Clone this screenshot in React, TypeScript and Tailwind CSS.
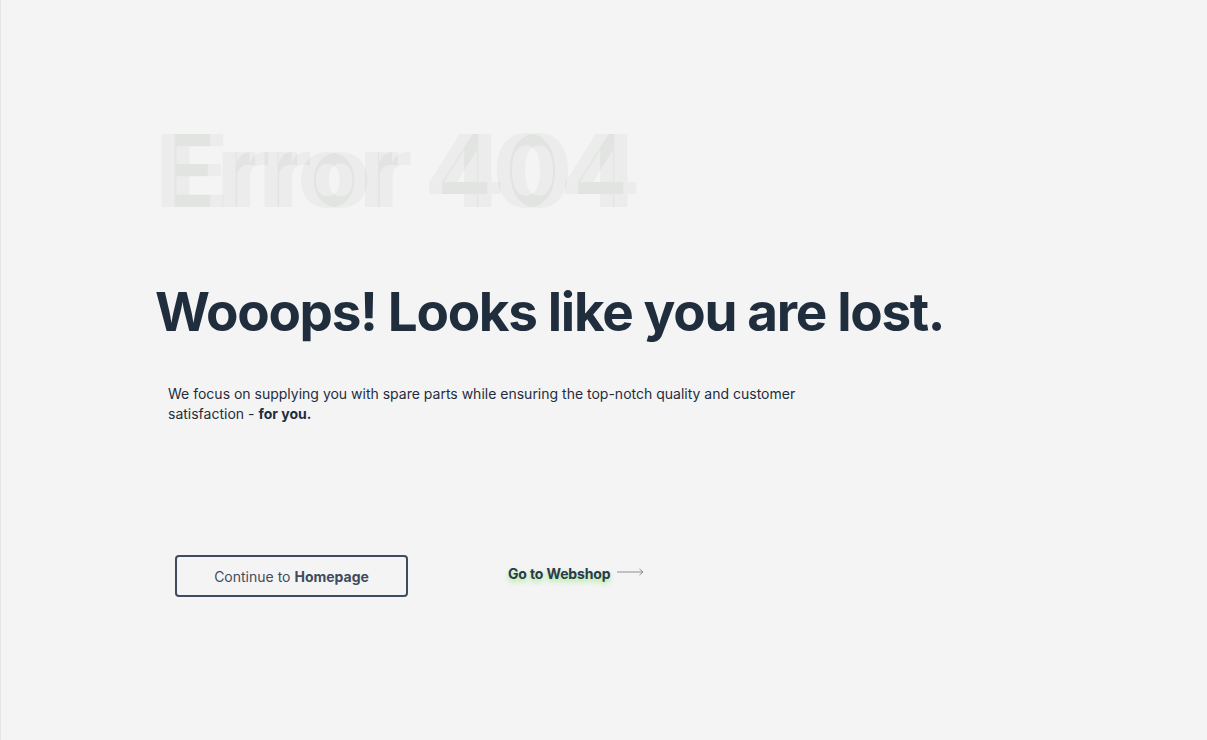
import React from 'react';

function GhostTitle() {
  return (
    <div className="relative ml-[-3px] h-[100px] select-none font-['Inter',sans-serif] text-[100px] font-bold leading-[100px] tracking-[0.005em] text-[rgba(20,40,20,0.04)]">
      <span className="block">Error 404</span>
      <span className="absolute left-[13px] top-0">Error 404</span>
    </div>
  );
}

export default function App() {
  return (
    <div className="min-h-[740px] w-full border-l border-[#e4e4e4] bg-[#f4f4f4] font-['Inter',sans-serif] text-[#1f2d3d]">
      <div className="pl-[157px] pt-[121px]">
        <GhostTitle />

        <h1 className="mt-[61px] ml-[-3px] text-[53px] font-bold leading-[60px] tracking-[-0.025em]">
          Wooops! Looks like you are lost.
        </h1>

        <p className="mt-[42px] ml-[10px] w-[640px] text-[14px] leading-[20px] text-[#1f2d3d]">
          We focus on supplying you with spare parts while ensuring the top-notch quality and customer
          satisfaction - <b className="font-bold">for you.</b>
        </p>

        <div className="mt-[131px] ml-[17px] flex items-center gap-[100px]">
          <button className="h-[42px] w-[233px] rounded-[4px] border-2 border-[#3f4b5e] text-[14px] text-[#3f4b5e]">
            Continue to <b className="font-bold">Homepage</b>
          </button>
          <a href="#" className="mt-[-6px] flex items-center gap-[7px] text-[14px] font-bold tracking-[-0.01em] text-[#2b3a4d]">
            <span className="[text-shadow:0_3px_5px_rgba(120,230,90,0.65)]">Go to Webshop</span>
            <svg width="27" height="8" viewBox="0 0 27 8" fill="none" className="mt-[-3px]">
              <path d="M0 4h26M22.5 1l3.5 3-3.5 3" stroke="#8a8f96" strokeWidth="1" />
            </svg>
          </a>
        </div>
      </div>
    </div>
  );
}
